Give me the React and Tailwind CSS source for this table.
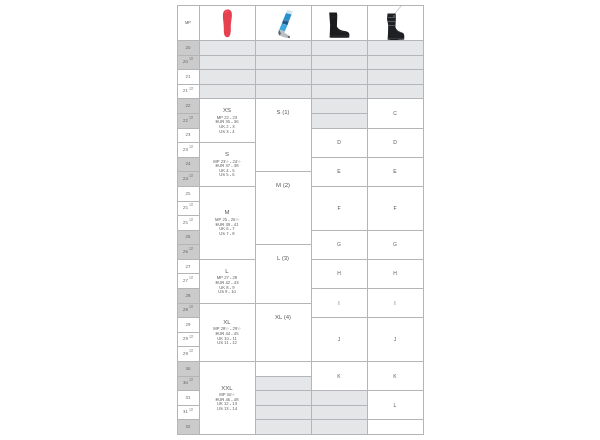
import React from "react";

const ROWS = [
  ["20", false, true], ["20", true, true], ["21", false, false], ["21", true, false],
  ["22", false, true], ["22", true, true], ["23", false, false], ["23", true, false],
  ["24", false, true], ["24", true, true], ["25", false, false], ["25", true, false],
  ["25", true, false], ["26", false, true], ["26", true, true], ["27", false, false],
  ["27", true, false], ["28", false, true], ["28", true, true], ["29", false, false],
  ["29", true, false], ["29", true, false], ["30", false, true], ["30", true, true],
  ["31", false, false], ["31", true, false], ["32", false, true],
];

const RS = [
  "row-start-2", "row-start-3", "row-start-4", "row-start-5", "row-start-6", "row-start-7",
  "row-start-8", "row-start-9", "row-start-10", "row-start-11", "row-start-12", "row-start-13",
  "row-start-14", "row-start-15", "row-start-16", "row-start-17", "row-start-18", "row-start-19",
  "row-start-20", "row-start-21", "row-start-22", "row-start-23", "row-start-24", "row-start-25",
  "row-start-26", "row-start-27", "row-start-28",
];
const SPAN = ["", "row-span-1", "row-span-2", "row-span-3", "row-span-4", "row-span-5"];
const COL = ["col-start-1", "col-start-2", "col-start-3", "col-start-4", "col-start-5"];

const INSOLES = [
  { r: 4, s: 3, t: "XS", l: ["MP 22 - 23", "EUR 35 - 36", "UK 2 - 3", "US 3 - 4"] },
  { r: 7, s: 3, t: "S", l: ["MP 23½ - 24½", "EUR 37 - 38", "UK 4 - 5", "US 5 - 6"] },
  { r: 10, s: 5, t: "M", l: ["MP 25 - 26½", "EUR 39 - 41", "UK 6 - 7", "US 7 - 8"] },
  { r: 15, s: 3, t: "L", l: ["MP 27 - 28", "EUR 42 - 43", "UK 8 - 9", "US 9 - 10"] },
  { r: 18, s: 4, t: "XL", l: ["MP 28½ - 29½", "EUR 44 - 45", "UK 10 - 11", "US 11 - 12"] },
  { r: 22, s: 5, t: "XXL", l: ["MP 30½", "EUR 46 - 48", "UK 12 - 13", "US 13 - 14"] },
];

const SOCKS = [
  { r: 4, s: 5, t: "S (1)" },
  { r: 9, s: 5, t: "M (2)" },
  { r: 14, s: 4, t: "L (3)" },
  { r: 18, s: 4, t: "XL (4)" },
];

const BOOTS3 = [
  { r: 6, s: 2, t: "D" }, { r: 8, s: 2, t: "E" }, { r: 10, s: 3, t: "F" },
  { r: 13, s: 2, t: "G" }, { r: 15, s: 2, t: "H" }, { r: 17, s: 2, t: "I" },
  { r: 19, s: 3, t: "J" }, { r: 22, s: 2, t: "K" },
];
const BOOTS4 = [
  { r: 4, s: 2, t: "C" }, ...BOOTS3, { r: 24, s: 2, t: "L" },
];

const GRAY = {
  1: [0, 1, 2, 3],
  2: [0, 1, 2, 3, 23, 24, 25, 26],
  3: [0, 1, 2, 3, 4, 5, 24, 25, 26],
  4: [0, 1, 2, 3],
};
const WHITE = { 2: [22], 4: [26] };

function Insole() {
  return (
    <svg width="11" height="29" viewBox="0 0 11 29">
      <path
        d="M5.6 0.6 C9 0.6 10.2 3 9.9 7 C9.6 11 8.7 14 8.8 18.5 C9 23.5 8.4 28.2 5.3 28.2 C2.3 28.2 1.7 24.5 1.8 19.5 C1.9 14.5 0.8 10.5 0.9 6.5 C1 2.8 2.3 0.6 5.6 0.6 Z"
        fill="#e6414f"
      />
      <path d="M3 4 C3.5 2.5 5 2 6 2.3" stroke="#f06874" strokeWidth="0.8" fill="none" />
    </svg>
  );
}

function Sock() {
  return (
    <svg width="22" height="30" viewBox="0 0 22 30">
      <polygon points="15.2,0.8 20.8,2.3 19.6,5.4 14,3.9" fill="#cfe6ef" />
      <polygon points="14,3.9 19.6,5.4 16.8,12.6 11.2,11" fill="#2d8fcb" />
      <polygon points="11.2,11 16.8,12.6 15.4,16.2 9.8,14.6" fill="#1f5c8c" />
      <polygon points="9.8,14.6 15.4,16.2 12.8,22.4 7.2,20.8" fill="#3fa9dc" />
      <path d="M7.2 20.8 L12.8 22.4 L12.6 24 C14.7 25.2 17 26.2 18 27.4 C18.4 28.4 17.6 29.2 16.2 29 C13.2 28.6 9.5 27.6 7.5 26.4 C6 25.4 6.1 23 7.2 20.8 Z" fill="#b9bec3" />
      <path d="M7.2 20.8 C6.1 23 6 25.4 7.5 26.4 L9 24.5 Z" fill="#5b6670" />
      <path d="M18 27.4 C18.4 28.4 17.6 29.2 16.2 29 L15.6 27 Z" fill="#5b6670" />
    </svg>
  );
}

function Boot1() {
  return (
    <svg width="22" height="27" viewBox="0 0 22 27">
      <path
        d="M1.2 0.5 L8.8 0.5 L9.3 3 L8.9 14.5 C10 17.2 12.8 18.6 16.8 19.1 C20 19.6 21.4 20.7 21.4 22.6 L21.3 25.4 C18 26 5 26 1.6 25.5 L1.9 19.5 L2.1 13 L1.2 0.5 Z"
        fill="#1d1d1f"
      />
      <path d="M2 24 L21 24" stroke="#3a3a3c" strokeWidth="0.6" />
      <path d="M3 5 L7.5 5" stroke="#38383a" strokeWidth="0.5" />
      <path d="M10.5 18 C12.5 19.5 15 20 17 20.2" stroke="#3c3c3e" strokeWidth="0.5" fill="none" />
    </svg>
  );
}

function Boot2() {
  return (
    <svg width="20" height="36" viewBox="0 0 20 36">
      <path d="M9.5 9 L16.5 0.5" stroke="#9a9ea2" strokeWidth="0.6" />
      <path
        d="M2.5 8.5 L10.5 8.5 L11 11 L10.4 22 C11.3 25 13.5 26.5 16 27.2 C18.4 27.8 19.4 29 19.3 31 L19.2 34.6 C15 35.2 6 35.2 2.6 34.8 L3 28 L3.2 20 L2 14 L2.5 8.5 Z"
        fill="#1f2023"
      />
      <path d="M3 12.5 L10.6 12.5 M3 16.5 L10.6 16.5 M3.2 20.5 L10.5 20.5" stroke="#6f7378" strokeWidth="0.7" />
      <path d="M11 24.5 C13 26.5 15 27.3 17 27.8" stroke="#55595e" strokeWidth="0.6" fill="none" />
      <path d="M3 33.5 L19 33.5" stroke="#45484c" strokeWidth="0.6" />
      <rect x="8" y="10" width="3" height="2" fill="#4a4d52" />
    </svg>
  );
}

function Cell({ c, r, s = 1, className = "", children }) {
  return (
    <div className={`${COL[c]} ${RS[r]} ${SPAN[s]} ${className}`}>{children}</div>
  );
}

export default function App() {
  return (
    <div className="w-[600px] h-[440px] bg-white pt-[5px] font-['Liberation_Sans',Arial,sans-serif] text-[#5c5c5c] antialiased">
      <div className="mx-auto w-[247px] h-[430px] grid grid-cols-[21px_55px_55px_55px_55px] grid-rows-[34px_repeat(27,minmax(0,1fr))] gap-px bg-[#b3b5b8] border border-[#b3b5b8]">
        {/* header */}
        <div className="col-start-1 row-start-1 bg-white flex items-center justify-center text-[4px] leading-none grayscale">MP</div>
        <div className="col-start-2 row-start-1 bg-white flex items-center justify-center pt-[1px]"><Insole /></div>
        <div className="col-start-3 row-start-1 bg-white flex items-center justify-center pt-[1px]"><Sock /></div>
        <div className="col-start-4 row-start-1 bg-white flex items-center justify-center pt-[4px]"><Boot1 /></div>
        <div className="col-start-5 row-start-1 bg-white flex items-center justify-center"><Boot2 /></div>

        {/* size labels */}
        {ROWS.map(([n, half, gray], i) => (
          <Cell
            key={"l" + i}
            c={0}
            r={i}
            className={`${gray ? "bg-[#c8cbcf]" : "bg-white"} flex items-center justify-center text-[4.3px] leading-none grayscale`}
          >
            <span>
              {n}
              {half && <sup className="text-[2.6px] ml-[1.5px] align-[1.6px]">1/2</sup>}
            </span>
          </Cell>
        ))}

        {/* gray and white empty cells */}
        {Object.entries(GRAY).map(([c, list]) =>
          list.map((r) => <Cell key={`g${c}-${r}`} c={Number(c)} r={r} className="bg-[#e5e6e8]" />)
        )}
        {Object.entries(WHITE).map(([c, list]) =>
          list.map((r) => <Cell key={`w${c}-${r}`} c={Number(c)} r={r} className="bg-white" />)
        )}

        {/* insoles */}
        {INSOLES.map((x) => (
          <Cell key={"i" + x.t} c={1} r={x.r} s={x.s} className="bg-white flex flex-col items-center justify-center grayscale">
            <div className="text-[6px] leading-none mb-[2.5px]">{x.t}</div>
            {x.l.map((line) => (
              <div key={line} className="text-[4.2px] leading-[4.6px] whitespace-nowrap">{line}</div>
            ))}
          </Cell>
        ))}

        {/* socks */}
        {SOCKS.map((x) => (
          <Cell key={"s" + x.t} c={2} r={x.r} s={x.s} className="bg-white flex justify-center pt-[10px] text-[6px] leading-none grayscale">
            {x.t}
          </Cell>
        ))}

        {/* boots */}
        {BOOTS3.map((x) => (
          <Cell key={"b3" + x.t} c={3} r={x.r} s={x.s} className="bg-white flex items-center justify-center text-[5px] leading-none grayscale">
            {x.t}
          </Cell>
        ))}
        {BOOTS4.map((x) => (
          <Cell key={"b4" + x.t} c={4} r={x.r} s={x.s} className="bg-white flex items-center justify-center text-[5px] leading-none grayscale">
            {x.t}
          </Cell>
        ))}
      </div>
    </div>
  );
}
